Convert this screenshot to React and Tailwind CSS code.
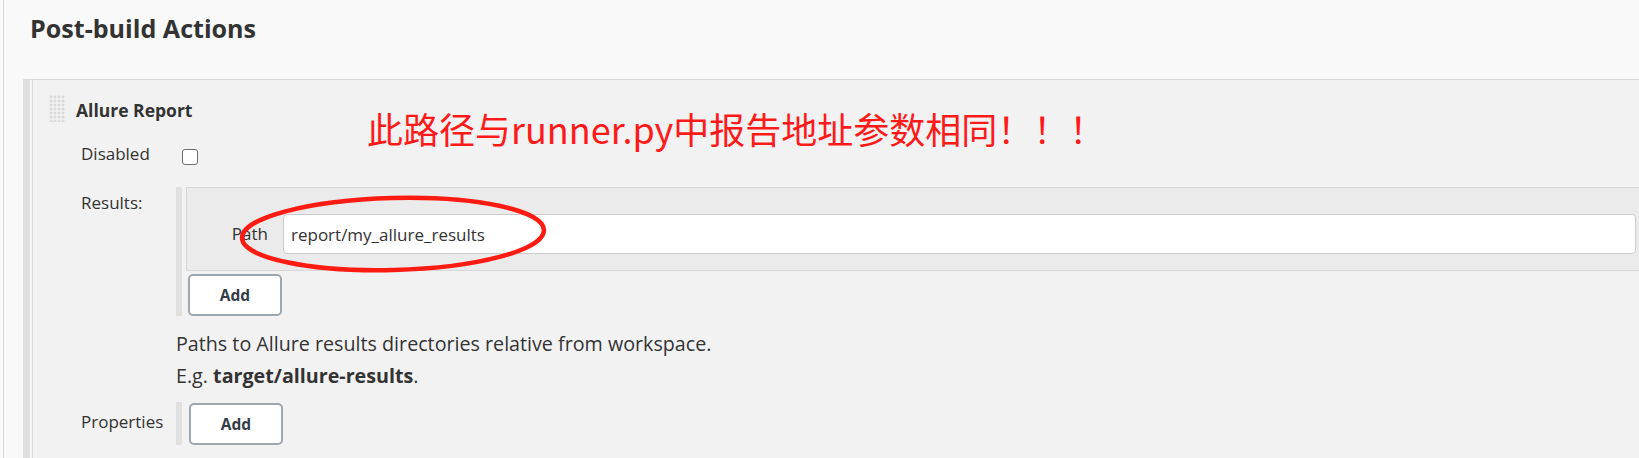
import React from 'react';

const Grip = () => (
  <svg width="16" height="27" viewBox="0 0 16 27" className="shrink-0">
    <rect width="16" height="27" fill="#fbfbfb" />
    {[0, 1, 2, 3].map((c) =>
      [0, 1, 2, 3, 4, 5, 6].map((r) => (
        <rect key={`${c}-${r}`} x={c * 4 + 0.5} y={r * 4 + 0.5} width="3" height="3" fill="#d9d9d9" />
      ))
    )}
  </svg>
);

const AddButton = ({ className = '' }) => (
  <button
    type="button"
    className={`w-[94px] h-[42px] rounded-[5px] border-2 border-[#9da7b1] bg-white text-[15.5px] font-bold text-[#333d47] ${className}`}
  >
    Add
  </button>
);

export default function App() {
  return (
    <div className="relative h-[458px] w-[1639px] overflow-hidden bg-[#f9f9f9] font-['Open_Sans',sans-serif] text-[#333]">
      <div className="ml-[3px] h-full border-l border-[#d6d6d6]">
        {/* page heading */}
        <div className="h-[79px] pl-[26px] pt-[12px]">
          <h2 className="text-[25.1px] font-bold leading-[32px] text-[#333]">Post-build Actions</h2>
        </div>

        {/* repeated chunk */}
        <div className="ml-[19px] h-full border-l-[7px] border-t border-l-[#e0e0e0] border-t-[#d9d9d9] bg-[#f6f6f6]">
          <div className="ml-[2px] h-full border-l border-[#dadada] bg-[#f2f2f2]">
            <div className="flex items-start pl-[16px] pt-[15px]">
              <Grip />
              <span className="ml-[11px] mt-[3px] text-[17.5px] font-bold leading-[24px]">Allure Report</span>
            </div>

            <div className="pl-[48px] text-[17px] leading-[24px]">
              <div className="mt-[20px] flex items-start">
                <div className="w-[95px] shrink-0">Disabled</div>
                <div className="ml-[6px] mt-[7px] h-[16px] w-[16px] rounded-[3px] border-[1.5px] border-[#6f6f6f] bg-white" />
              </div>

              <div className="mt-[21px] flex items-start">
                <div className="mt-[4px] w-[95px] shrink-0">Results:</div>
                <div className="flex-1 border-l-[6px] border-[#e0e0e0] pl-[4px]">
                  <div className="flex items-center border border-r-0 border-[#d6d6d6] bg-[#ebebeb] pb-[16px] pr-[3px] pt-[26px]">
                    <div className="w-[81px] shrink-0 text-right">Path</div>
                    <input
                      readOnly
                      value="report/my_allure_results"
                      className="ml-[15px] h-[40px] flex-1 rounded-[4px] border border-[#cccccc] bg-white pl-[7px] text-[17px] text-[#333] outline-none"
                    />
                  </div>
                  <AddButton className="ml-[2px] mt-[3px]" />
                </div>
              </div>

              <div className="mt-[12px] flex">
                <div className="w-[95px] shrink-0" />
                <div className="text-[19.7px] leading-[32px]">
                  <p>Paths to Allure results directories relative from workspace.</p>
                  <p>
                    E.g. <b>target/allure-results</b>.
                  </p>
                </div>
              </div>

              <div className="mt-[10px] flex items-start">
                <div className="mt-[8px] w-[95px] shrink-0">Properties</div>
                <div className="border-l-[6px] border-[#e0e0e0] pl-[7px]">
                  <AddButton className="mt-[1px] h-[41px]" />
                </div>
              </div>
            </div>
          </div>
        </div>
      </div>

      {/* annotation */}
      <div className="absolute left-[367px] top-[110px] whitespace-nowrap font-['Noto_Sans_CJK_SC',sans-serif] text-[36px] leading-none text-[#ff1a1a]">
        此路径与runner.py中报告地址参数相同！！！
      </div>
      <svg className="absolute left-[235px] top-[192px]" width="316" height="84" viewBox="0 0 316 84">
        <ellipse cx="158" cy="42" rx="151" ry="36" fill="none" stroke="#ff1a12" strokeWidth="4.5" transform="rotate(-1.5 158 42)" />
      </svg>
    </div>
  );
}
